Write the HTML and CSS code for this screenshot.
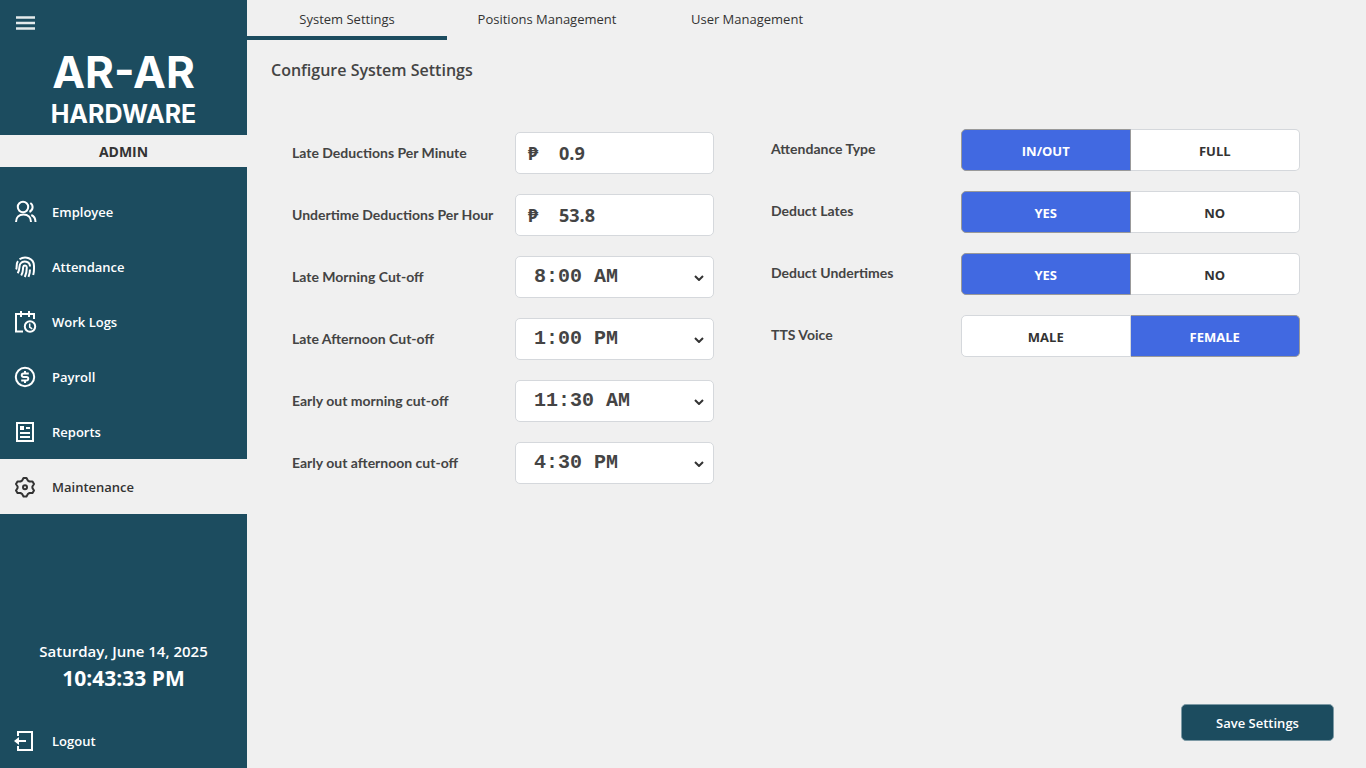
FILE: index.html
```html
<!DOCTYPE html>
<html lang="en">
<head>
<meta charset="utf-8">
<meta name="viewport" content="width=device-width, initial-scale=1">
<title>AR-AR Hardware - Maintenance</title>
<link rel="stylesheet" href="styles.css">
</head>
<body>
<div class="app">
  <aside class="sidebar">
    <header class="brand">
      <button class="menu-button" type="button" aria-label="Toggle menu">
        <svg width="20" height="16" viewBox="0 0 20 16"><path d="M0 2.500h19M0 8h19M0 13.500h19" fill="none" stroke="#e4eaec" stroke-width="2.300"/></svg>
      </button>
      <div class="logo"><span class="logo-name">AR-AR</span><span class="logo-kind">HARDWARE</span></div>
    </header>
    <div class="role">ADMIN</div>
    <nav class="nav">
      <a class="nav-item" href="#employee">
        <svg class="icon" viewBox="0 0 24 24"><circle cx="10" cy="7" r="5.200"/><path d="M3 22c0-4.500 3-7.500 7.500-7.500s7.500 3 7.500 7.500M17.300 3c3.200 2 3.200 6.800-.8 9M18.300 15c2.700 1.200 4.200 3.600 4.200 7"/></svg>
        Employee</a>
      <a class="nav-item" href="#attendance">
        <svg class="icon" viewBox="0 0 24 24"><path d="M6.500 4.300C12 .5 21 3 21 11v3c0 2.200-.2 4-.8 6M3.200 14.500C4.300 12 2.700 9 5 6.200M4.700 18.300C7.500 14 5.500 11 7.500 8.500c3-3.600 9.500-2 9.500 3M17 14.500c0 3-.5 5-1.500 7.300M8.200 20.500c2.300-3.500 1.500-6 2-8.500.5-2.200 3.600-2 3.600.5 0 3.500-.5 6.500-2 9.500"/></svg>
        Attendance</a>
      <a class="nav-item" href="#work-logs">
        <svg class="icon" viewBox="0 0 24 24"><path d="M10 21.500H3V4h18v5M8 1v6M16 1v6"/><circle cx="17" cy="16.500" r="5.200"/><path d="M16.700 13.500V17l2.500 1.800" stroke-width="1.500"/></svg>
        Work Logs</a>
      <a class="nav-item" href="#payroll">
        <svg class="icon" viewBox="0 0 24 24"><circle cx="12" cy="12" r="9.200"/><path d="M15.800 8.500h-5.300a1.750 1.750 0 0 0 0 3.500h3a1.750 1.750 0 0 1 0 3.500H8.200M12 6v2.500M12 15.500V18"/></svg>
        Payroll</a>
      <a class="nav-item" href="#reports">
        <svg class="icon" viewBox="0 0 24 24"><path d="M4 3h16v18H4zM13 8h4M7 13h10M7 17h10"/><path class="solid" d="M7 6h4v4H7z"/></svg>
        Reports</a>
      <a class="nav-item nav-item-current" href="#maintenance" aria-current="page">
        <svg class="icon" viewBox="0 0 24 24"><path stroke-linejoin="round" d="M10.500 3h3l1.500 2.700 1.500.8 3-.1 1.500 2.600-1.600 2.500v1.500l1.600 2.500-1.500 2.600-3-.1-1.500.8-1.500 2.700h-3L9 18.800 7.500 18l-3 .1L3 15.500 4.600 13v-1.500L3 9l1.500-2.600 3 .1L9 5.700z"/><circle cx="12" cy="12.200" r="2"/></svg>
        Maintenance</a>
    </nav>
    <div class="clock">
      <div class="clock-date">Saturday, June 14, 2025</div>
      <div class="clock-time">10:43:33 PM</div>
    </div>
    <a class="nav-item" href="#logout">
      <svg class="icon" viewBox="0 0 24 24"><path d="M5 7V3h14v18H5v-4M5 12h8"/><path class="solid" d="M1 12l5-4v8z"/></svg>
      Logout</a>
  </aside>

  <main class="main">
    <nav class="tabs">
      <a class="tab tab-current" href="#system" aria-current="page">System Settings</a>
      <a class="tab" href="#positions">Positions Management</a>
      <a class="tab" href="#users">User Management</a>
    </nav>
    <h1 class="title">Configure System Settings</h1>
    <form class="settings">
      <div class="columns">
        <div class="column column-values">
          <div class="row">
            <label class="label" for="late-rate">Late Deductions Per Minute</label>
            <div class="money"><span class="peso">₱</span><input class="money-input" id="late-rate" type="text" value="0.9"></div>
          </div>
          <div class="row">
            <label class="label" for="under-rate">Undertime Deductions Per Hour</label>
            <div class="money"><span class="peso">₱</span><input class="money-input" id="under-rate" type="text" value="53.8"></div>
          </div>
          <div class="row">
            <label class="label" for="late-am">Late Morning Cut-off</label>
            <div class="picker"><select class="select" id="late-am"><option>8:00 AM</option></select><svg class="chevron" viewBox="0 0 10 6"><path d="M1 1l4 4 4-4"/></svg></div>
          </div>
          <div class="row">
            <label class="label" for="late-pm">Late Afternoon Cut-off</label>
            <div class="picker"><select class="select" id="late-pm"><option>1:00 PM</option></select><svg class="chevron" viewBox="0 0 10 6"><path d="M1 1l4 4 4-4"/></svg></div>
          </div>
          <div class="row">
            <label class="label" for="early-am">Early out morning cut-off</label>
            <div class="picker"><select class="select" id="early-am"><option>11:30 AM</option></select><svg class="chevron" viewBox="0 0 10 6"><path d="M1 1l4 4 4-4"/></svg></div>
          </div>
          <div class="row">
            <label class="label" for="early-pm">Early out afternoon cut-off</label>
            <div class="picker"><select class="select" id="early-pm"><option>4:30 PM</option></select><svg class="chevron" viewBox="0 0 10 6"><path d="M1 1l4 4 4-4"/></svg></div>
          </div>
        </div>
        <div class="column column-choices">
          <div class="row" role="radiogroup" aria-labelledby="type-label">
            <span class="label" id="type-label">Attendance Type</span>
            <div class="segments">
              <label class="segment"><input class="segment-input" type="radio" name="type" checked>IN/OUT</label>
              <label class="segment"><input class="segment-input" type="radio" name="type">FULL</label>
            </div>
          </div>
          <div class="row" role="radiogroup" aria-labelledby="lates-label">
            <span class="label" id="lates-label">Deduct Lates</span>
            <div class="segments">
              <label class="segment"><input class="segment-input" type="radio" name="lates" checked>YES</label>
              <label class="segment"><input class="segment-input" type="radio" name="lates">NO</label>
            </div>
          </div>
          <div class="row" role="radiogroup" aria-labelledby="under-label">
            <span class="label" id="under-label">Deduct Undertimes</span>
            <div class="segments">
              <label class="segment"><input class="segment-input" type="radio" name="under" checked>YES</label>
              <label class="segment"><input class="segment-input" type="radio" name="under">NO</label>
            </div>
          </div>
          <div class="row" role="radiogroup" aria-labelledby="voice-label">
            <span class="label" id="voice-label">TTS Voice</span>
            <div class="segments">
              <label class="segment"><input class="segment-input" type="radio" name="voice">MALE</label>
              <label class="segment"><input class="segment-input" type="radio" name="voice" checked>FEMALE</label>
            </div>
          </div>
        </div>
      </div>
      <button class="save" type="submit">Save Settings</button>
    </form>
  </main>
</div>
</body>
</html>
```
FILE: styles.css
```css
* { box-sizing: border-box; }

body {
  margin: 0;
  background: #f0f0f0;
  color: #444;
  font-family: "Open Sans", "Noto Sans", sans-serif;
  font-size: 13px;
}

a { color: inherit; text-decoration: none; }

.app { display: flex; min-height: 100vh; }

/* Sidebar */
.sidebar {
  display: flex;
  flex-direction: column;
  flex: none;
  width: 247px;
  background: #1c4c5f;
  color: #fff;
}

.brand { padding: 15px 16px 5px; }

.menu-button {
  display: block;
  padding: 0;
  border: 0;
  background: none;
  cursor: pointer;
}

.menu-button svg { display: block; }

.logo {
  display: flex;
  flex-direction: column;
  align-items: center;
  padding-top: 15px;
  font-family: Inter, sans-serif;
  font-weight: 700;
}

.logo-name { font-size: 44px; line-height: 53px; }
.logo-kind { font-size: 25px; line-height: 31px; }

.role {
  padding-top: 1px;
  height: 32px;
  background: #f0f0f0;
  color: #333;
  font-size: 14px;
  font-weight: 700;
  line-height: 32px;
  text-align: center;
}

.nav { padding-top: 17px; }

.nav-item {
  display: flex;
  align-items: center;
  gap: 15px;
  height: 55px;
  padding-left: 13px;
  font-weight: 600;
}

.nav-item-current { background: #f0f0f0; color: #333; }

.icon {
  width: 24px;
  height: 24px;
  fill: none;
  stroke: currentColor;
  stroke-width: 2;
}

.icon .solid { fill: currentColor; stroke: none; }

.clock {
  margin-top: auto;
  padding-bottom: 20px;
  text-align: center;
}

.clock-date { font-size: 15px; font-weight: 600; line-height: 24px; }
.clock-time { font-size: 21px; font-weight: 700; line-height: 30px; }

/* Main area */
.main {
  display: flex;
  flex-direction: column;
  flex: 1;
  min-width: 0;
}

.tabs { display: flex; }

.tab {
  width: 200px;
  height: 40px;
  border-bottom: 4px solid transparent;
  color: #333;
  line-height: 38px;
  text-align: center;
}

.tab-current { border-color: #1c4c5f; }

.title {
  margin: 0;
  padding: 18px 24px 0;
  font-size: 16px;
  font-weight: 600;
  line-height: 24px;
}

.settings {
  display: flex;
  flex-direction: column;
  flex: 1;
  padding: 47px 32px 27px 45px;
}

.columns {
  display: grid;
  grid-template-columns: minmax(0, 422fr) minmax(0, 529fr);
  column-gap: 57px;
  padding-right: 34px;
}

.column {
  display: flex;
  flex-direction: column;
  gap: 20px;
}

.column-values { padding-top: 3px; }

.row {
  display: grid;
  align-items: center;
  min-height: 42px;
}

.column-values .row { grid-template-columns: 223px minmax(0, 1fr); }
.column-choices .row { grid-template-columns: 190px minmax(0, 1fr); }

.label {
  font-family: Lato, sans-serif;
  font-size: 14px;
  font-weight: 700;
  line-height: 20px;
}

.column-choices .label { padding-bottom: 2px; }

.money,
.select {
  width: 100%;
  height: 42px;
  border: 1px solid #d5d8dc;
  border-radius: 5px;
  background: #fff;
  color: #444;
}

.money {
  display: flex;
  align-items: center;
  padding-left: 12px;
  font-size: 18px;
  font-weight: 700;
}

.peso {
  width: 31px;
  font-family: "Noto Sans", sans-serif;
}

.money-input {
  flex: 1;
  min-width: 0;
  padding: 0;
  border: 0;
  outline: 0;
  background: none;
  color: inherit;
  font: inherit;
}

.picker { position: relative; }

.select {
  display: block;
  appearance: none;
  padding: 0 32px 2px 18px;
  font-family: "Liberation Mono", monospace;
  font-size: 20px;
  font-weight: 700;
}

.chevron {
  position: absolute;
  right: 10px;
  top: 19px;
  width: 10px;
  height: 6px;
  fill: none;
  stroke: #333;
  stroke-width: 2;
  pointer-events: none;
}

.segments { display: grid; grid-template-columns: 1fr 1fr; }

.segment {
  position: relative;
  height: 42px;
  padding-top: 1px;
  border: 1px solid #d5d8dc;
  background: #fff;
  color: #333;
  font-weight: 700;
  line-height: 40px;
  text-align: center;
  cursor: pointer;
}

.segment:first-child { border-radius: 5px 0 0 5px; }
.segment:last-child { border-left: 0; border-radius: 0 5px 5px 0; }

.segment:has(:checked) {
  border-color: #999;
  background: #4169e1;
  color: #fff;
}

.segment-input {
  position: absolute;
  inset: 0;
  margin: 0;
  opacity: 0;
}

.save {
  align-self: flex-end;
  margin-top: auto;
  width: 153px;
  height: 37px;
  border: 1px solid #7d9aa5;
  border-radius: 5px;
  background: #1c4c5f;
  color: #fff;
  font: 600 13px "Open Sans", "Noto Sans", sans-serif;
  cursor: pointer;
}
```
